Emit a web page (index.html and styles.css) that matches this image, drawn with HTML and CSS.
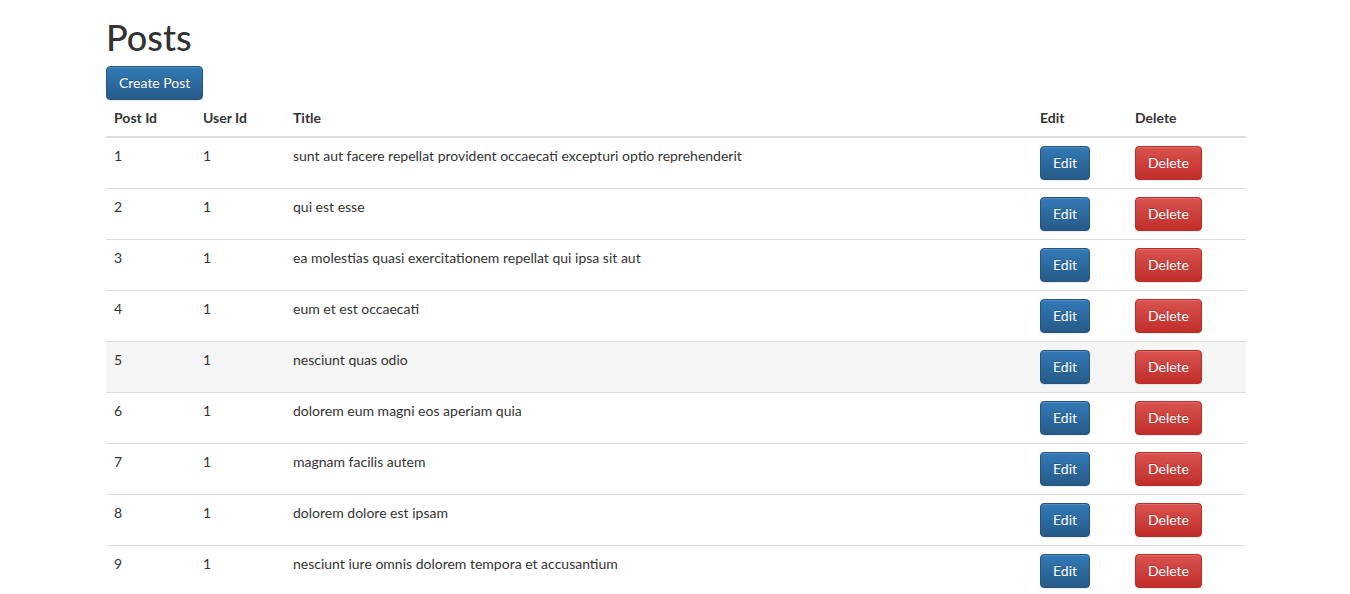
FILE: index.html
```html
<!DOCTYPE html>
<html>
<head>
<meta charset="utf-8">
<link rel="stylesheet" href="styles.css">
</head>
<body>
<div class="container">
  <h1 class="title">Posts</h1>
  <button class="btn btn-primary">Create Post</button>
  <table class="table">
    <thead>
      <tr>
        <th class="c-id">Post Id</th>
        <th class="c-user">User Id</th>
        <th class="c-title">Title</th>
        <th class="c-edit">Edit</th>
        <th class="c-del">Delete</th>
      </tr>
    </thead>
    <tbody>
      <tr><td>1</td><td>1</td><td>sunt aut facere repellat provident occaecati excepturi optio reprehenderit</td><td><button class="btn btn-primary">Edit</button></td><td><button class="btn btn-danger">Delete</button></td></tr>
      <tr><td>2</td><td>1</td><td>qui est esse</td><td><button class="btn btn-primary">Edit</button></td><td><button class="btn btn-danger">Delete</button></td></tr>
      <tr><td>3</td><td>1</td><td>ea molestias quasi exercitationem repellat qui ipsa sit aut</td><td><button class="btn btn-primary">Edit</button></td><td><button class="btn btn-danger">Delete</button></td></tr>
      <tr><td>4</td><td>1</td><td>eum et est occaecati</td><td><button class="btn btn-primary">Edit</button></td><td><button class="btn btn-danger">Delete</button></td></tr>
      <tr class="hover"><td>5</td><td>1</td><td>nesciunt quas odio</td><td><button class="btn btn-primary">Edit</button></td><td><button class="btn btn-danger">Delete</button></td></tr>
      <tr><td>6</td><td>1</td><td>dolorem eum magni eos aperiam quia</td><td><button class="btn btn-primary">Edit</button></td><td><button class="btn btn-danger">Delete</button></td></tr>
      <tr><td>7</td><td>1</td><td>magnam facilis autem</td><td><button class="btn btn-primary">Edit</button></td><td><button class="btn btn-danger">Delete</button></td></tr>
      <tr><td>8</td><td>1</td><td>dolorem dolore est ipsam</td><td><button class="btn btn-primary">Edit</button></td><td><button class="btn btn-danger">Delete</button></td></tr>
      <tr><td>9</td><td>1</td><td>nesciunt iure omnis dolorem tempora et accusantium</td><td><button class="btn btn-primary">Edit</button></td><td><button class="btn btn-danger">Delete</button></td></tr>
    </tbody>
  </table>
</div>
</body>
</html>
```
FILE: styles.css
```css
* { box-sizing: border-box; }
html, body { margin: 0; padding: 0; }
body {
  font-family: Lato, "Open Sans", sans-serif;
  font-size: 14px;
  line-height: 20px;
  color: #333;
  background: #fff;
}
.container {
  width: 1170px;
  padding: 0 14px 0 16px;
  margin: 0 auto;
}
.title {
  font-size: 36px;
  font-weight: 500;
  line-height: 40px;
  margin: 17px 0 9px;
}
.btn {
  display: inline-block;
  font-family: inherit;
  font-size: 14px;
  line-height: 20px;
  padding: 6px 12px;
  border: 1px solid transparent;
  border-radius: 4px;
  color: #fff;
  cursor: pointer;
  text-shadow: 0 -1px 0 rgba(0,0,0,.2);
  box-shadow: inset 0 1px 0 rgba(255,255,255,.15), 0 1px 1px rgba(0,0,0,.075);
}
.btn-primary {
  background-image: linear-gradient(to bottom, #337ab7 0, #265a88 100%);
  border-color: #245580;
}
.btn-danger {
  background-image: linear-gradient(to bottom, #d9534f 0, #c12e2a 100%);
  border-color: #b92c28;
}
.table {
  width: 100%;
  border-collapse: collapse;
  border-spacing: 0;
}
.table th {
  text-align: left;
  font-weight: bold;
  padding: 8px;
  line-height: 20px;
  border-bottom: 2px solid #ddd;
  vertical-align: bottom;
}
.table td {
  padding: 8px;
  line-height: 20px;
  vertical-align: top;
  border-top: 1px solid #ddd;
}
.table tbody tr:first-child td { border-top: 0; }
.table tr.hover td { background: #f5f5f5; }
.c-id { width: 89px; }
.c-user { width: 90px; }
.c-edit { width: 95px; }
.c-del { width: 119px; }
```
